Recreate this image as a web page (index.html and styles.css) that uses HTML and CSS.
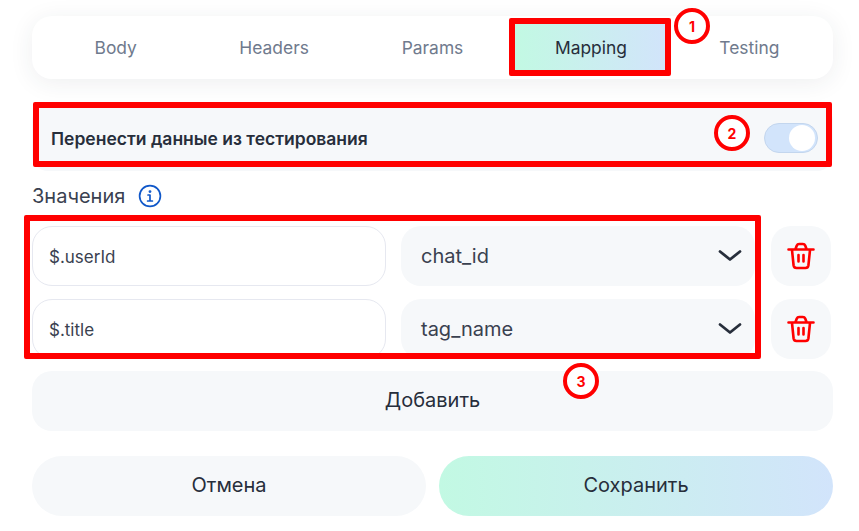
FILE: index.html
```html
<!DOCTYPE html>
<html lang="ru">
<head>
<meta charset="utf-8">
<title>Mapping</title>
<link rel="stylesheet" href="styles.css">
</head>
<body>
<main class="page">
  <nav class="tabs">
    <div class="tab">Body</div>
    <div class="tab">Headers</div>
    <div class="tab">Params</div>
    <div class="tab tab-active">Mapping</div>
    <div class="tab">Testing</div>
  </nav>

  <section class="transfer">
    <span class="transfer-label">Перенести данные из тестирования</span>
    <span class="toggle"><span class="knob"></span></span>
  </section>

  <div class="values-title">
    <span>Значения</span>
    <svg class="info" width="24" height="24" viewBox="0 0 24 24" fill="none" stroke="#0f57c9" stroke-width="1.7" stroke-linecap="round" stroke-linejoin="round">
      <circle cx="12" cy="12" r="10.4"/>
      <path d="M10 11h2v6M9.6 17h4.8"/>
      <circle cx="12" cy="7.6" r="0.6" fill="#0f57c9"/>
    </svg>
  </div>

  <div class="rows">
    <div class="field">$.userId</div>
    <div class="select"><span>chat_id</span>
      <svg width="24" height="24" viewBox="0 0 24 24" fill="none" stroke="#272e3b" stroke-width="2.8" stroke-linecap="round" stroke-linejoin="round"><path d="M2 6.500l10 8 10-8"/></svg>
    </div>
    <div class="trash">
      <svg width="28" height="28" viewBox="0 0 28 28" fill="none" stroke="#ff0000" stroke-width="2.6" stroke-linecap="round" stroke-linejoin="round"><path d="M1.500 7.500h25M5 8l1.600 15.500a3 3 0 0 0 3 2.500h8.800a3 3 0 0 0 3-2.500L23 8M8.500 7l1.300-3.500a2.500 2.500 0 0 1 2.300-1.500h3.800a2.500 2.500 0 0 1 2.300 1.500L19.500 7M11.500 13v6.500M16.500 13v6.500"/></svg>
    </div>
    <div class="field">$.title</div>
    <div class="select"><span>tag_name</span>
      <svg width="24" height="24" viewBox="0 0 24 24" fill="none" stroke="#272e3b" stroke-width="2.8" stroke-linecap="round" stroke-linejoin="round"><path d="M2 6.500l10 8 10-8"/></svg>
    </div>
    <div class="trash">
      <svg width="28" height="28" viewBox="0 0 28 28" fill="none" stroke="#ff0000" stroke-width="2.6" stroke-linecap="round" stroke-linejoin="round"><path d="M1.500 7.500h25M5 8l1.600 15.500a3 3 0 0 0 3 2.500h8.800a3 3 0 0 0 3-2.500L23 8M8.500 7l1.300-3.500a2.500 2.500 0 0 1 2.300-1.500h3.800a2.500 2.500 0 0 1 2.300 1.500L19.500 7M11.500 13v6.500M16.500 13v6.500"/></svg>
    </div>
  </div>

  <button class="add" type="button">Добавить</button>

  <div class="actions">
    <button class="btn btn-cancel" type="button">Отмена</button>
    <button class="btn btn-save" type="button">Сохранить</button>
  </div>

  <div class="mark mark-tab"></div>
  <div class="mark mark-transfer"></div>
  <div class="mark mark-rows"></div>
  <div class="badge badge-1">1</div>
  <div class="badge badge-2">2</div>
  <div class="badge badge-3">3</div>
</main>
</body>
</html>
```
FILE: styles.css
```css
* { box-sizing: border-box; }

html, body {
  margin: 0;
  background: #fff;
}

body {
  font-family: Inter, "Noto Sans", sans-serif;
  color: #272e3b;
  overflow: hidden;
}

.page {
  position: relative;
  width: 859px;
  height: 531px;
  padding: 16px 26px 0 32px;
}

.tabs {
  display: flex;
  gap: 7px;
  height: 63px;
  padding: 8px;
  border-radius: 20px;
  background: #fff;
  box-shadow: 0 4px 24px rgba(39, 46, 59, 0.08);
}

.tab {
  flex: 1;
  display: flex;
  align-items: center;
  justify-content: center;
  font-size: 17.4px;
  color: #6f7a8d;
}

.tab-active {
  color: #272e3b;
  background: linear-gradient(90deg, #c2f9e3 0%, #d2e4fb 100%);
}

.transfer {
  display: flex;
  align-items: center;
  justify-content: space-between;
  height: 66px;
  margin-top: 26px;
  padding: 0 15px 0 19px;
  border-radius: 16px;
  background: #f6f8fa;
}

.transfer-label {
  font-size: 17.5px;
  font-weight: 600;
  color: #272e3b;
}

.toggle {
  display: flex;
  align-items: center;
  justify-content: flex-end;
  width: 54px;
  height: 30px;
  padding-right: 2px;
  border: 1px solid #c3d6ee;
  border-radius: 15px;
  background: #d2e4fb;
}

.knob {
  width: 26px;
  height: 26px;
  border-radius: 50%;
  background: #fff;
}

.values-title {
  display: flex;
  align-items: center;
  gap: 13px;
  height: 24px;
  margin-top: 13px;
  font-size: 20px;
  color: #3a4150;
}

.rows {
  display: grid;
  grid-template-columns: 354px 354px 61px;
  grid-auto-rows: 60px;
  column-gap: 15px;
  row-gap: 13px;
  margin-top: 18px;
}

.rows .trash { margin-left: 1px; }

.field {
  display: flex;
  align-items: center;
  padding: 1px 16px 0;
  border: 1px solid #e6e8f0;
  border-radius: 20px;
  font-size: 17px;
  color: #3a4150;
}

.select {
  display: flex;
  align-items: center;
  justify-content: space-between;
  padding: 0 13px 0 20px;
  border-radius: 20px;
  background: #f6f8fa;
  font-size: 20px;
  color: #3a4150;
}

.select svg { margin-top: 2px; }

.trash {
  display: flex;
  align-items: center;
  justify-content: center;
  border-radius: 20px;
  background: #f6f8fa;
}

.add {
  display: block;
  width: 801px;
  height: 60px;
  margin-top: 12px;
  padding: 0 0 2px;
  border: 0;
  border-radius: 20px;
  background: #f6f8fa;
  font: 400 20px Inter, "Noto Sans", sans-serif;
  color: #272e3b;
}

.actions {
  display: grid;
  grid-template-columns: 394px 394px;
  column-gap: 13px;
  margin-top: 25px;
}

.btn {
  height: 60px;
  padding: 0 0 2px;
  border: 0;
  border-radius: 30px;
  font: 400 20px Inter, "Noto Sans", sans-serif;
  color: #272e3b;
}

.btn-cancel { background: #f6f8fa; }

.btn-save { background: linear-gradient(90deg, #c2f9e3 0%, #d2e4fb 100%); }

.mark {
  position: absolute;
  border: 6px solid #ff0000;
  border-radius: 2px;
}

.mark-tab { left: 509px; top: 18px; width: 162px; height: 58px; }
.mark-transfer { left: 33px; top: 102px; width: 799px; height: 65px; }
.mark-rows { left: 24px; top: 215px; width: 737px; height: 144px; }

.badge {
  position: absolute;
  display: flex;
  align-items: center;
  justify-content: center;
  width: 36px;
  height: 36px;
  border: 4px solid #ff0000;
  border-radius: 50%;
  background: #fff;
  font-size: 14px;
  font-weight: 700;
  color: #ff0000;
}

.badge-1 { left: 674px; top: 8px; }
.badge-2 { left: 714px; top: 115px; }
.badge-3 { left: 563px; top: 363px; }
```
